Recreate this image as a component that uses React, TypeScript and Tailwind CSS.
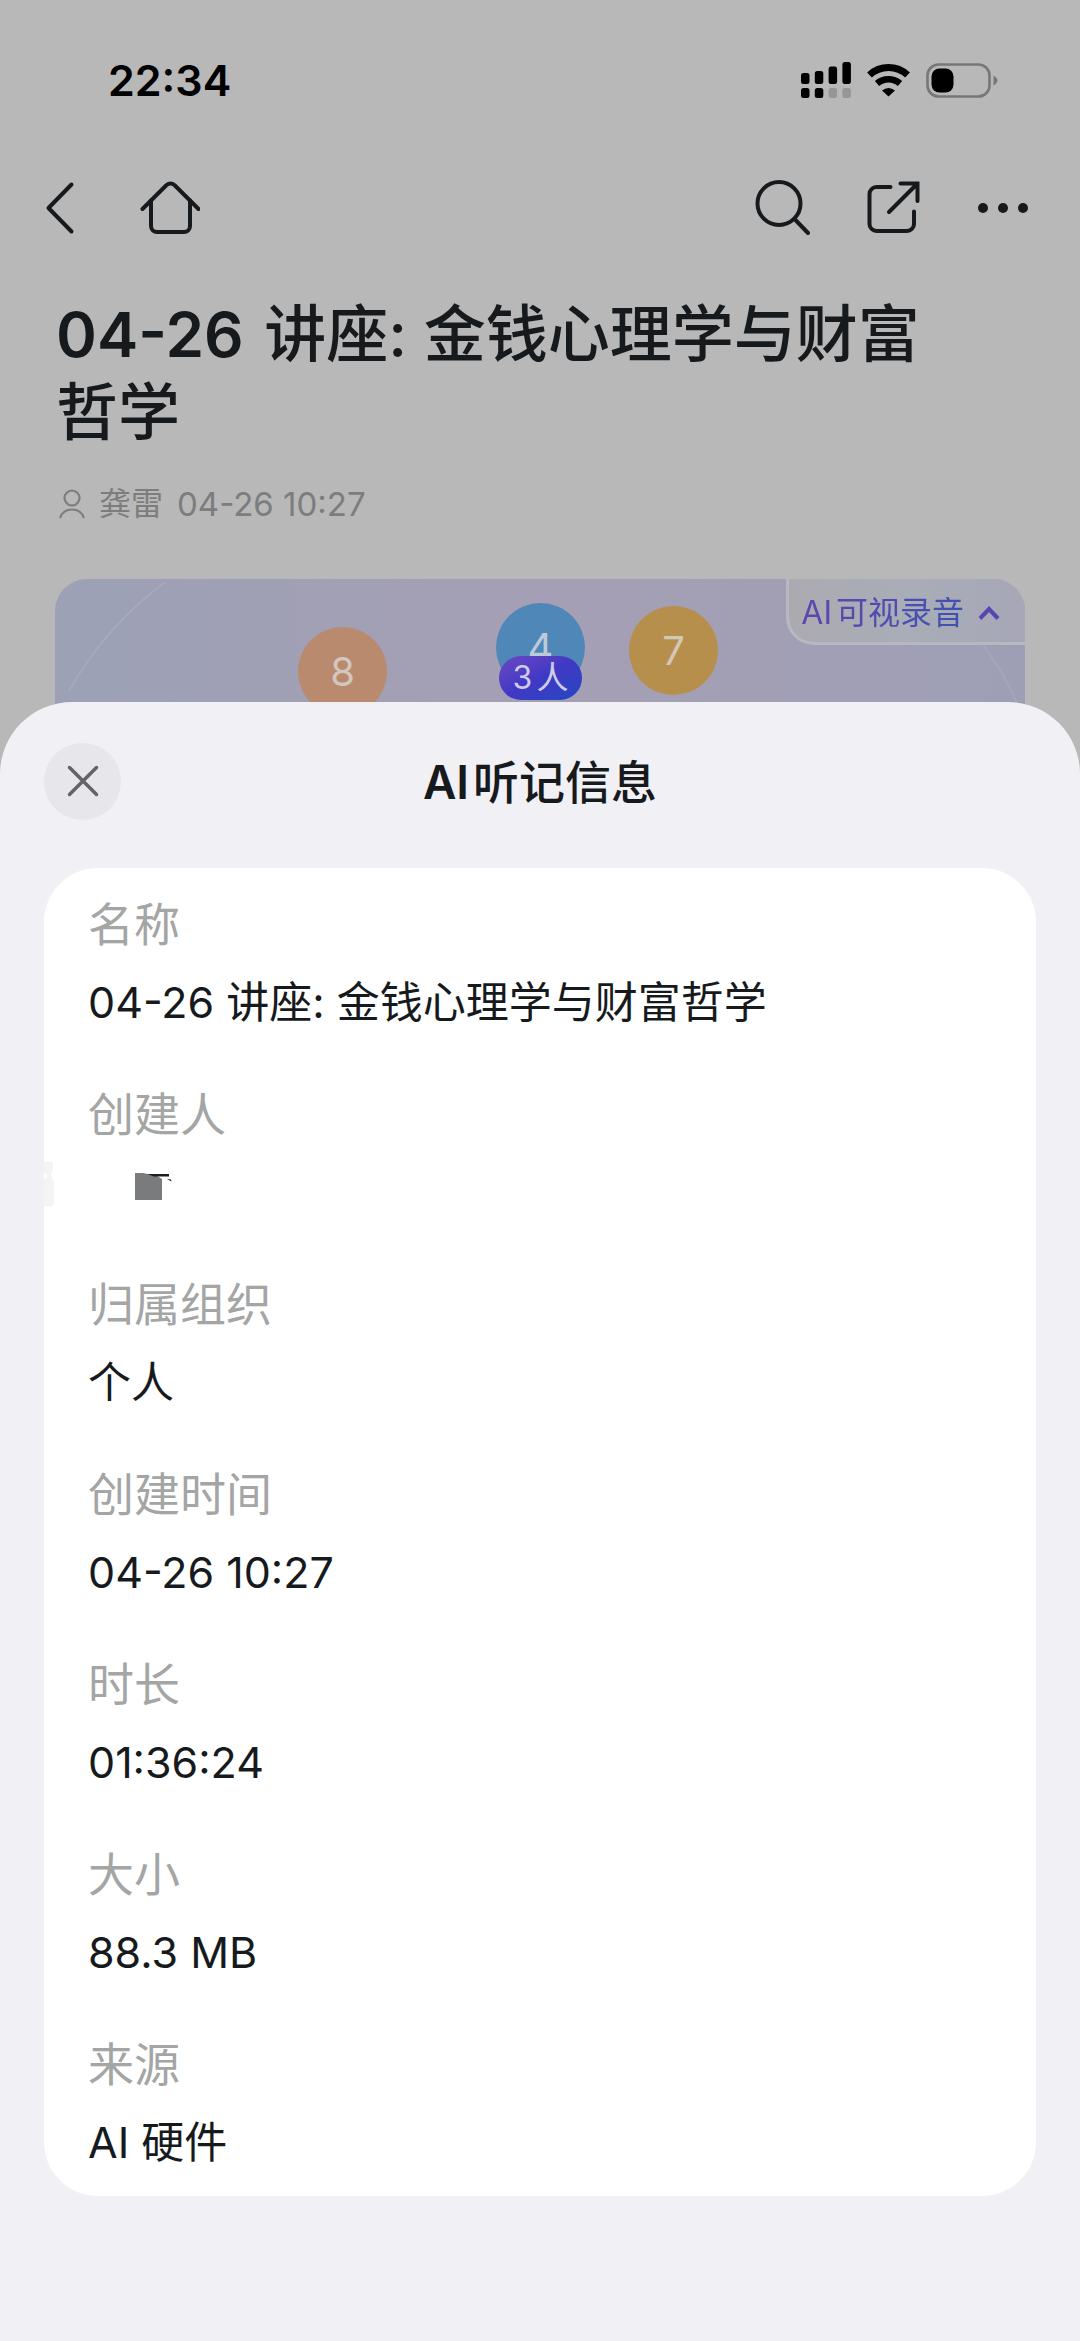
/**
 * Recording info page.
 *
 * Shows the recording detail in the background, dimmed,
 * and a bottom sheet with the recording's metadata on top.
 */

import type { ReactNode } from "react";

interface InfoItem {
  label: string;
  value: ReactNode;
}

const INFO_ITEMS: InfoItem[] = [
  { label: "名称", value: "04-26 讲座: 金钱心理学与财富哲学" },
  { label: "创建人", value: <MaskedName /> },
  { label: "归属组织", value: "个人" },
  { label: "创建时间", value: "04-26 10:27" },
  { label: "时长", value: "01:36:24" },
  { label: "大小", value: "88.3 MB" },
  { label: "来源", value: "AI 硬件" },
];

function MaskedName() {
  return (
    <svg width="130" height="64" viewBox="0 18 130 64" className="-ml-11 block" aria-hidden="true">
      <path d="M0 20h7q3 0 2 6l-2 7 3 8v19q0 4-3 4H0V38l3-4-3-4Z" fill="#f4f4f4" />
      <path d="M91 31h8l14 3 5 3v21H91Z" fill="#7a7b7d" />
      <path d="M103 32h22v2.500h-15Z" fill="#1b1d1f" />
      <path d="M123 37l4 .5.5 2Z" fill="#1b1d1f" />
    </svg>
  );
}

function StatusBar() {
  return (
    <div className="flex h-40 items-center justify-between pl-[108px] pr-[82px] text-black">
      <span className="text-[43px] leading-none font-semibold">22:34</span>
      <div className="flex items-center gap-4">
        <svg width="50" height="36" viewBox="0 0 50 36" fill="currentColor" aria-hidden="true">
          <rect x="0" y="11" width="8.500" height="11" rx="2.500" />
          <rect x="13.800" y="9" width="8.500" height="13" rx="2.500" />
          <rect x="27.600" y="4.500" width="8.500" height="17.500" rx="2.500" />
          <rect x="41.400" y="0" width="8.500" height="22" rx="2.500" />
          <rect x="0" y="26" width="8.500" height="10" rx="2.500" />
          <rect x="13.800" y="26" width="8.500" height="10" rx="2.500" />
          <rect x="27.600" y="26" width="8.500" height="10" rx="2.500" opacity="0.18" />
          <rect x="41.400" y="26" width="8.500" height="10" rx="2.500" opacity="0.18" />
        </svg>
        <svg width="43" height="34" viewBox="0 0 43 34" fill="none" stroke="currentColor" aria-hidden="true">
          <path d="M2.500 12A28 28 0 0 1 40.500 12" strokeWidth="7" />
          <path d="M10 20.500A17.500 17.500 0 0 1 33 20.500" strokeWidth="6.500" />
          <path d="M15 27.500Q21.500 22.500 28 27.500L21.500 33.500Z" fill="currentColor" stroke="none" />
        </svg>
        <svg width="72" height="36" viewBox="0 0 72 36" fill="none" aria-hidden="true">
          <rect x="1.500" y="2.500" width="62" height="32" rx="11" stroke="#777" strokeWidth="2.600" />
          <rect x="5.500" y="6.500" width="22" height="24" rx="8" fill="currentColor" />
          <path d="M67.500 13.500Q71.500 16 71.500 18.500T67.500 23.500Z" fill="#777" />
        </svg>
      </div>
    </div>
  );
}

function NavButton({ label, children }: { label: string; children: ReactNode }) {
  return (
    <button type="button" aria-label={label} className="size-[60px]">
      <svg
        width="60"
        height="60"
        viewBox="0 0 60 60"
        fill="none"
        stroke="currentColor"
        strokeWidth="4"
        strokeLinecap="round"
      >
        {children}
      </svg>
    </button>
  );
}

function NavBar() {
  return (
    <nav className="flex h-24 items-center justify-between pl-[30px] pr-[47px]">
      <div className="flex gap-[50px]">
        <NavButton label="返回">
          <path d="M41.500 6.500 18.500 30l23 23.500" strokeLinejoin="round" />
        </NavButton>
        <NavButton label="首页">
          <path d="M2.500 31 26.300 7.300Q30.500 3.800 34.700 7.300L58.500 31" />
          <path d="M11 22.500V48a6 6 0 0 0 6 6h27a6 6 0 0 0 6-6V22.500" />
        </NavButton>
      </div>
      <div className="flex gap-[50px]">
        <NavButton label="搜索">
          <circle cx="26" cy="25.500" r="21.500" />
          <path d="M41.500 41 55 55" />
        </NavButton>
        <NavButton label="分享">
          <path d="M27.500 9H13.500a7 7 0 0 0-7 7v30a7 7 0 0 0 7 7H44a7 7 0 0 0 7-7V33.500" />
          <path d="M26 34 54 6M37.500 5.500h17v17.500" />
        </NavButton>
        <NavButton label="更多">
          <g fill="currentColor" stroke="none">
            <circle cx="10" cy="30" r="5" />
            <circle cx="30" cy="30" r="5" />
            <circle cx="50" cy="30" r="5" />
          </g>
        </NavButton>
      </div>
    </nav>
  );
}

function Banner() {
  return (
    <div className="relative mx-[55px] mt-[51px] h-[180px] overflow-hidden rounded-[32px] bg-linear-to-r from-[#9ca1b5] via-[#a59fb5] to-[#9e9fb5]">
      <svg className="absolute inset-0" width="970" height="180" fill="none" stroke="#b4bac4" strokeWidth="2" aria-hidden="true">
        <path d="M110 3Q50 48 14 112" opacity="0.4" />
        <path d="M928 66Q948 92 962 124" opacity="0.3" />
      </svg>

      {/* Speaker bubbles */}
      <div className="absolute left-[243px] top-12 flex size-[89px] items-center justify-center rounded-full bg-[#b98a6e] text-[40px] text-[#d2c6bd]">
        8
      </div>
      <div className="absolute left-[441px] top-6 flex size-[89px] items-center justify-center rounded-full bg-[#4f87b8] text-[40px] text-[#bccbd8]">
        4
      </div>
      <div className="absolute left-[574px] top-[27px] flex size-[89px] items-center justify-center rounded-full bg-[#b78f4c] text-[40px] text-[#d2c8b6]">
        7
      </div>
      <div className="absolute left-[444px] top-[77px] flex h-11 w-[83px] items-center justify-center gap-1 rounded-full bg-linear-to-br from-[#6c48c4] via-[#4038c4] to-[#1d48c4] text-[32px] text-[#cfcbe8]">
        <span>3</span>
        <span>人</span>
      </div>

      <button
        type="button"
        className="absolute right-0 top-0 flex h-[66px] items-center gap-[14px] rounded-bl-[28px] border-b-[3px] border-l-[3px] border-[#b8b8c2] bg-linear-to-r from-[#acaab1] via-[#a8adb7] to-[#a7a7b7] pt-1 pl-3 pr-[25px] text-[32px] leading-none text-[#5945b0]"
      >
        <span className="flex gap-1 bg-linear-to-r from-[#5f44ae] to-[#3f52b0] bg-clip-text text-transparent">
          <span>AI</span>
          <span>可视录音</span>
        </span>
        <svg width="22" height="16" viewBox="0 0 22 16" fill="none" stroke="currentColor" strokeWidth="4" aria-hidden="true">
          <path d="M2 13.500 11 4l9 9.500" />
        </svg>
      </button>
    </div>
  );
}

function InfoSheet() {
  return (
    <section className="relative -mt-[57px] flex-1 rounded-t-[72px] bg-[#f1f0f5] px-11 pb-36">
      <header className="grid h-[166px] grid-cols-[77px_1fr_77px] items-center pb-2">
        <button
          type="button"
          aria-label="关闭"
          className="flex size-[77px] items-center justify-center rounded-full bg-[#e7e7eb] text-[#636467]"
        >
          <svg width="32" height="32" viewBox="0 0 32 32" stroke="currentColor" strokeWidth="3.500" strokeLinecap="round">
            <path d="M2.500 2.500l27 27M29.500 2.500l-27 27" />
          </svg>
        </button>
        <h2 className="pt-0.5 text-center text-[46px] leading-none font-medium">
          <span className="mr-1 font-semibold">AI</span>
          <span>听记信息</span>
        </h2>
      </header>

      <dl className="flex flex-col gap-12 rounded-[54px] bg-white px-11 pt-6 pb-[22px]">
        {INFO_ITEMS.map((item) => (
          <div key={item.label} className="flex flex-col gap-[14px]">
            <dt className="text-[46px] leading-16 text-[#a4a5a5]">{item.label}</dt>
            <dd className="h-16 text-[43px] leading-16">{item.value}</dd>
          </div>
        ))}
      </dl>
    </section>
  );
}

export default function App() {
  return (
    <div className="flex min-h-screen flex-col bg-[#b8b8b8] font-['Inter','Noto_Sans_CJK_SC',sans-serif] text-[#171a1d]">
      <StatusBar />
      <NavBar />

      <main className="flex flex-1 flex-col">
        <div className="pl-14 pr-32 pt-10">
          <h1 className="text-[62px] leading-[78px] font-medium">
            <span className="mr-1 font-semibold">04-26</span> <span>讲座: 金钱心理学与财富哲学</span>
          </h1>
          <div className="mt-7 flex items-center text-[33px] leading-12 text-[#7c7d7e]">
            <svg width="30" height="30" viewBox="0 0 30 30" fill="none" stroke="currentColor" strokeWidth="2.200" aria-hidden="true">
              <circle cx="16" cy="9" r="7.500" />
              <path d="M4 29Q7 20.500 16 20.500T28 29" />
            </svg>
            <span className="ml-[13px] text-[32px]">龚雷</span>
            <span className="ml-[14px]">04-26 10:27</span>
          </div>
        </div>
        <Banner />
        <InfoSheet />
      </main>
    </div>
  );
}
